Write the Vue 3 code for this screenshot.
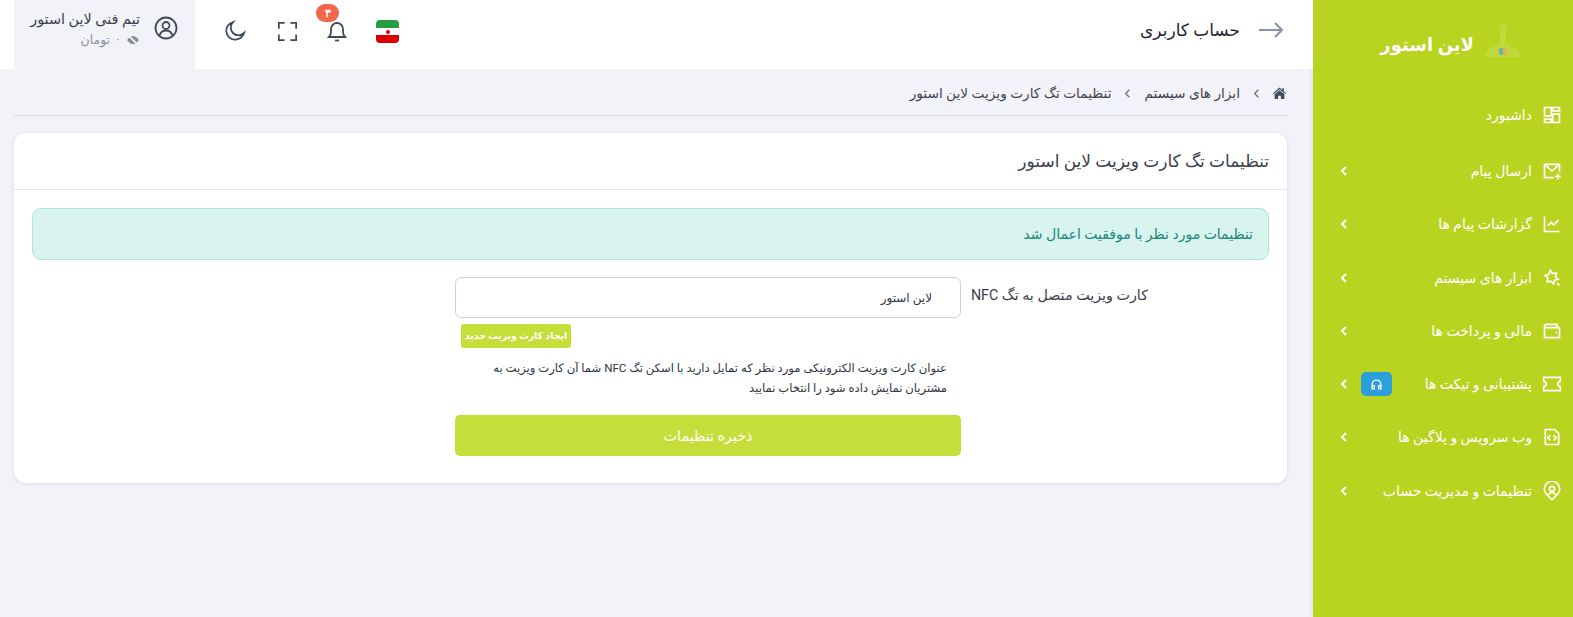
<script setup>
import { ref } from 'vue'

const cardName = ref('لاین استور')

const menu = [
  { label: 'داشبورد', paths: ['M3 3h8v10H3z', 'M3 17h8v4H3z', 'M13 3h8v4h-8z', 'M13 11h8v10h-8z'] },
  { label: 'ارسال پیام', arrow: true, paths: ['M21 13V4H3v16h11', 'M3 4l9 8 9-8', 'M19 15v7', 'M15.5 18.5h7'] },
  { label: 'گزارشات پیام ها', arrow: true, paths: ['M3 3v18h18', 'M7 14l4-4 3 3 6-6'] },
  { label: 'ابزار های سیستم', arrow: true, paths: ['M10 3l2.6 3.6 4.4-.6-.8 4.5 3.3 3-4.4 1.1-1.3 4.4-3.2-3.2-4.5.7 1-4.4-3.3-3.3 4.4-1.2z', 'M18 18l3 3'] },
  { label: 'مالی و پرداخت ها', arrow: true, paths: ['M3 6a2 2 0 0 1 2-2h13v4H3', 'M3 6v14h18V8h-3', 'M16 14h2'] },
  { label: 'پشتیبانی و تیکت ها', arrow: true, badge: true, paths: ['M2 4h20v5a3 3 0 0 0 0 6v5H2v-5a3 3 0 0 0 0-6z'] },
  { label: 'وب سرویس و پلاگین ها', arrow: true, paths: ['M4 3h11l5 5v13H4z', 'M10 10l-3 3 3 3', 'M14 10l3 3-3 3'] },
  { label: 'تنظیمات و مدیریت حساب', arrow: true, paths: ['M12 22.5l-6.5-6.5a9.2 9.2 0 1 1 13 0z', 'M12 6.5a3 3 0 1 0 0 6 3 3 0 0 0 0-6z', 'M7.5 16.5a5 5 0 0 1 9 0'] }
]
</script>

<template>
  <div class="layout">
    <aside class="sidebar">
      <div class="brand">
        <svg class="brand-logo" viewBox="0 0 36 36" width="36" height="36">
          <circle cx="18" cy="5" r="3" fill="#c4da45" />
          <path d="M15 9h6l-1 14h-4z" fill="#c4da45" />
          <path d="M0 35c2-8 7-11 11-11 2-4 12-4 14 0 4 0 9 3 11 11z" fill="#c0d83c" />
          <rect x="14" y="26" width="4" height="7" fill="#6fb8a0" />
          <rect x="18" y="26" width="4" height="7" fill="#d8b850" />
        </svg>
        <span class="brand-name">لاین استور</span>
      </div>
      <nav class="menu">
        <a v-for="item in menu" :key="item.label" class="menu-item">
          <svg class="menu-icon" viewBox="0 0 24 24">
            <path v-for="d in item.paths" :key="d" :d="d" />
          </svg>
          <span class="menu-label">{{ item.label }}</span>
          <span v-if="item.badge" class="menu-badge">
            <svg viewBox="0 0 24 24" width="13" height="13">
              <path d="M4 15v-3a8 8 0 0 1 16 0v3" />
              <path d="M4 14h4v6H4z" />
              <path d="M16 14h4v6h-4z" />
            </svg>
          </span>
          <svg v-if="item.arrow" class="menu-arrow" viewBox="0 0 12 12">
            <path d="M8 2L4 6l4 4" />
          </svg>
        </a>
      </nav>
    </aside>

    <div class="main">
      <header class="topbar">
        <div class="page-title">
          <svg class="back-icon" viewBox="0 0 24 16" width="24" height="16">
            <path d="M0 8h23" />
            <path d="M16 1l7 7-7 7" />
          </svg>
          <span>حساب کاربری</span>
        </div>
        <div class="tools">
          <div class="flag">
            <span class="flag-green"></span>
            <span class="flag-white"><i></i></span>
            <span class="flag-red"></span>
          </div>
          <button class="tool-btn bell">
            <svg viewBox="0 0 24 24" width="24" height="24">
              <path d="M4 18c1.5-1.5 2-3 2-5V10a6 6 0 0 1 12 0v3c0 2 .5 3.500 2 5z" />
              <path d="M10 21.500h4" />
            </svg>
            <span class="bell-count">۳</span>
          </button>
          <button class="tool-btn">
            <svg viewBox="0 0 24 24" width="23" height="23">
              <path d="M3 9V3h6" />
              <path d="M15 3h6v6" />
              <path d="M21 15v6h-6" />
              <path d="M9 21H3v-6" />
            </svg>
          </button>
          <button class="tool-btn moon">
            <svg viewBox="0 0 24 24" width="24" height="24">
              <path d="M10 3a9 9 0 1 0 11 11 7.500 7.500 0 0 1-11-11z" />
            </svg>
          </button>
          <div class="account">
            <svg class="account-icon" viewBox="0 0 24 24" width="24" height="24">
              <circle cx="12" cy="12" r="10.500" />
              <circle cx="12" cy="9.500" r="3.500" />
              <path d="M5.500 19.500c1-3.500 3.500-5 6.500-5s5.500 1.500 6.500 5" />
            </svg>
            <div class="account-info">
              <div class="account-name">تیم فنی لاین استور</div>
              <div class="account-balance">
                <svg viewBox="0 0 24 24" width="14" height="14">
                  <path d="M2 12s4-7 10-7 10 7 10 7-4 7-10 7-10-7-10-7z" fill="#8b8f9c" />
                  <path class="slash" d="M4 4l16 16" />
                </svg>
                <span class="zero">۰</span>
                <span>تومان</span>
              </div>
            </div>
          </div>
        </div>
      </header>

      <div class="content">
        <div class="breadcrumb">
          <svg class="home-icon" viewBox="0 0 24 22" width="13" height="12">
            <path d="M12 1L0 11.500l1.500 1.500L12 4l10.500 9 1.500-1.500L20 8V2h-3v3.500z" />
            <path d="M12 6L3 13.500V22h6.500v-6h5v6H21v-8.500z" />
          </svg>
          <svg class="crumb-arrow" viewBox="0 0 12 12"><path d="M8 2L4 6l4 4" /></svg>
          <span>ابزار های سیستم</span>
          <svg class="crumb-arrow" viewBox="0 0 12 12"><path d="M8 2L4 6l4 4" /></svg>
          <span>تنظیمات تگ کارت ویزیت لاین استور</span>
        </div>

        <section class="card">
          <h1 class="card-title">تنظیمات تگ کارت ویزیت لاین استور</h1>
          <div class="card-body">
            <div class="alert">تنظیمات مورد نظر با موفقیت اعمال شد</div>
            <div class="form-row">
              <label class="form-label">کارت ویزیت متصل به تگ NFC</label>
              <div class="form-field">
                <input v-model="cardName" class="text-input" type="text" />
                <a class="new-card">ایجاد کارت ویزیت جدید</a>
                <p class="hint">عنوان کارت ویزیت الکترونیکی مورد نظر که تمایل دارید با اسکن تگ NFC شما آن کارت ویزیت به مشتریان نمایش داده شود را انتخاب نمایید</p>
                <button class="save-btn">ذخیره تنظیمات</button>
              </div>
            </div>
          </div>
        </section>
      </div>
    </div>
  </div>
</template>

<style>
html, body {
  margin: 0;
  background: #f2f2f9;
}
</style>

<style scoped>
.layout {
  display: flex;
  direction: rtl;
  height: 617px;
  overflow: hidden;
  font-family: Roboto, "DejaVu Sans", sans-serif;
  font-size: 13px;
  color: #2f3542;
  background: #f2f2f9;
}

.sidebar {
  width: 260px;
  flex-shrink: 0;
  background: #b8d320;
  color: #fff;
  box-shadow: 0 0 6px rgba(60, 60, 90, 0.12);
}
.brand {
  height: 88px;
  display: flex;
  align-items: center;
  gap: 11px;
  padding-right: 52px;
}
.brand-logo { margin-bottom: 8px; }
.brand-name {
  font-size: 18px;
  font-weight: 700;
}
.menu-item {
  height: 53.300px;
  display: flex;
  align-items: center;
  padding: 0 11px 0 25px;
  font-size: 14px;
}
.menu-item:first-child { margin-bottom: 3px; }
.menu-icon {
  width: 20px;
  height: 20px;
  margin-left: 10px;
  fill: none;
  stroke: #fff;
  stroke-width: 2;
}
.menu-badge {
  width: 31px;
  height: 24px;
  margin-right: 33px;
  border-radius: 5px;
  background: #2a9fdc;
  display: flex;
  align-items: center;
  justify-content: center;
}
.menu-badge svg {
  fill: none;
  stroke: #fff;
  stroke-width: 2.500;
}
.menu-arrow {
  width: 12px;
  height: 12px;
  margin-right: auto;
  fill: none;
  stroke: #fff;
  stroke-width: 2;
}

.main {
  flex: 1;
  min-width: 0;
}
.topbar {
  height: 69px;
  background: #fff;
  display: flex;
  align-items: stretch;
  justify-content: space-between;
  padding: 0 30px 0 14px;
}
.page-title {
  display: flex;
  align-items: center;
  gap: 19px;
  font-size: 17px;
  color: #1f2430;
  padding-bottom: 10px;
}
.back-icon {
  fill: none;
  stroke: #8c92a4;
  stroke-width: 2;
}
.tools {
  display: flex;
  align-items: flex-start;
  padding-top: 18px;
}
.flag {
  width: 23px;
  height: 23px;
  border-radius: 4px;
  overflow: hidden;
  display: flex;
  flex-direction: column;
  margin-top: 2px;
  margin-left: 26px;
}
.flag span { flex: 1; }
.flag-green { background: #239f40; }
.flag-white {
  background: #fff;
  display: flex;
  align-items: center;
  justify-content: center;
}
.flag-white i {
  width: 4px;
  height: 4px;
  border-radius: 50%;
  background: #da0000;
}
.flag-red { background: #da0000; }
.tool-btn {
  width: 26px;
  height: 26px;
  padding: 0;
  border: 0;
  background: none;
  display: flex;
  align-items: center;
  justify-content: center;
  position: relative;
  margin-left: 26px;
}
.tool-btn.bell { margin-left: 24px; }
.tool-btn.moon { margin-left: 23px; }
.tool-btn svg {
  fill: none;
  stroke: #3f4a5a;
  stroke-width: 1.800;
}
.bell-count {
  position: absolute;
  top: -14px;
  right: 11px;
  width: 23px;
  height: 18px;
  border-radius: 9px;
  background: #f2674a;
  color: #fff;
  font-size: 11px;
  font-weight: 700;
  line-height: 18px;
  text-align: center;
}
.account {
  width: 181px;
  height: 69px;
  margin-top: -18px;
  box-sizing: border-box;
  background: #f2f2f9;
  display: flex;
  align-items: flex-start;
  gap: 14px;
  padding: 12px 17px 0 0;
  margin-right: 4px;
}
.account-icon {
  margin-top: 4px;
  fill: none;
  stroke: #3f4a5a;
  stroke-width: 1.800;
}
.account-name {
  font-size: 14.400px;
  line-height: 16px;
  color: #3a404d;
  margin-bottom: 4px;
}
.account-balance {
  display: flex;
  align-items: center;
  gap: 5px;
  font-size: 12.500px;
  line-height: 16px;
  color: #8b8f9c;
}
.slash {
  fill: none;
  stroke: #f2f2f9;
  stroke-width: 3;
}
.zero {
  color: #f2674a;
  font-size: 11px;
}

.content {
  padding: 0 26px 0 14px;
}
.breadcrumb {
  height: 44px;
  padding: 2px 1px 0 0;
  border-bottom: 1px solid #d9d9df;
  display: flex;
  align-items: center;
  font-size: 13.700px;
  color: #3f4550;
}
.home-icon {
  fill: #3f4a5a;
  margin-left: 11px;
}
.crumb-arrow {
  width: 11px;
  height: 11px;
  margin-left: 11px;
  fill: none;
  stroke: #6d7585;
  stroke-width: 1.500;
}
.breadcrumb span + .crumb-arrow { margin-right: 11px; }

.card {
  margin-top: 17px;
  background: #fff;
  border-radius: 12px;
  box-shadow: 0 1px 4px rgba(60, 60, 90, 0.12);
}
.card-title {
  margin: 0;
  height: 57px;
  box-sizing: border-box;
  padding: 0 18px;
  display: flex;
  align-items: center;
  border-bottom: 1px solid #e6e6ea;
  font-size: 17px;
  font-weight: 400;
  color: #3a404d;
}
.card-body {
  padding: 18px 18px 27px;
}
.alert {
  height: 52px;
  box-sizing: border-box;
  display: flex;
  align-items: center;
  padding: 0 15px;
  background: #d9f4ee;
  border: 1px solid #aee6da;
  border-radius: 9px;
  color: #17877a;
  font-size: 14px;
}
.form-row {
  display: flex;
  margin-top: 17px;
}
.form-label {
  width: 300px;
  box-sizing: border-box;
  padding: 10px 121px 0 0;
  white-space: nowrap;
  font-size: 14.300px;
  color: #3a404d;
  margin-left: 8px;
}
.form-field {
  width: 506px;
}
.text-input {
  display: block;
  width: 100%;
  height: 41px;
  box-sizing: border-box;
  padding: 0 28px;
  border: 1px solid #cdd2de;
  border-radius: 6px;
  direction: rtl;
  font: inherit;
  font-size: 12px;
  color: #2f3542;
  background: #fff;
}
.new-card {
  display: block;
  margin: 6px auto 0 6px;
  width: 110px;
  height: 24px;
  line-height: 24px;
  text-align: center;
  white-space: nowrap;
  border-radius: 3px;
  background: #c6de3a;
  color: #fff;
  font-size: 9.400px;
  font-weight: 700;
}
.hint {
  margin: 11px 0 0;
  padding: 0 14px;
  font-size: 11.600px;
  line-height: 19.500px;
  color: #2f3542;
}
.save-btn {
  display: block;
  width: 100%;
  height: 41px;
  margin-top: 17px;
  border: 0;
  border-radius: 5px;
  background: #c6de3a;
  color: #fff;
  font: inherit;
  font-size: 14.300px;
}
</style>
